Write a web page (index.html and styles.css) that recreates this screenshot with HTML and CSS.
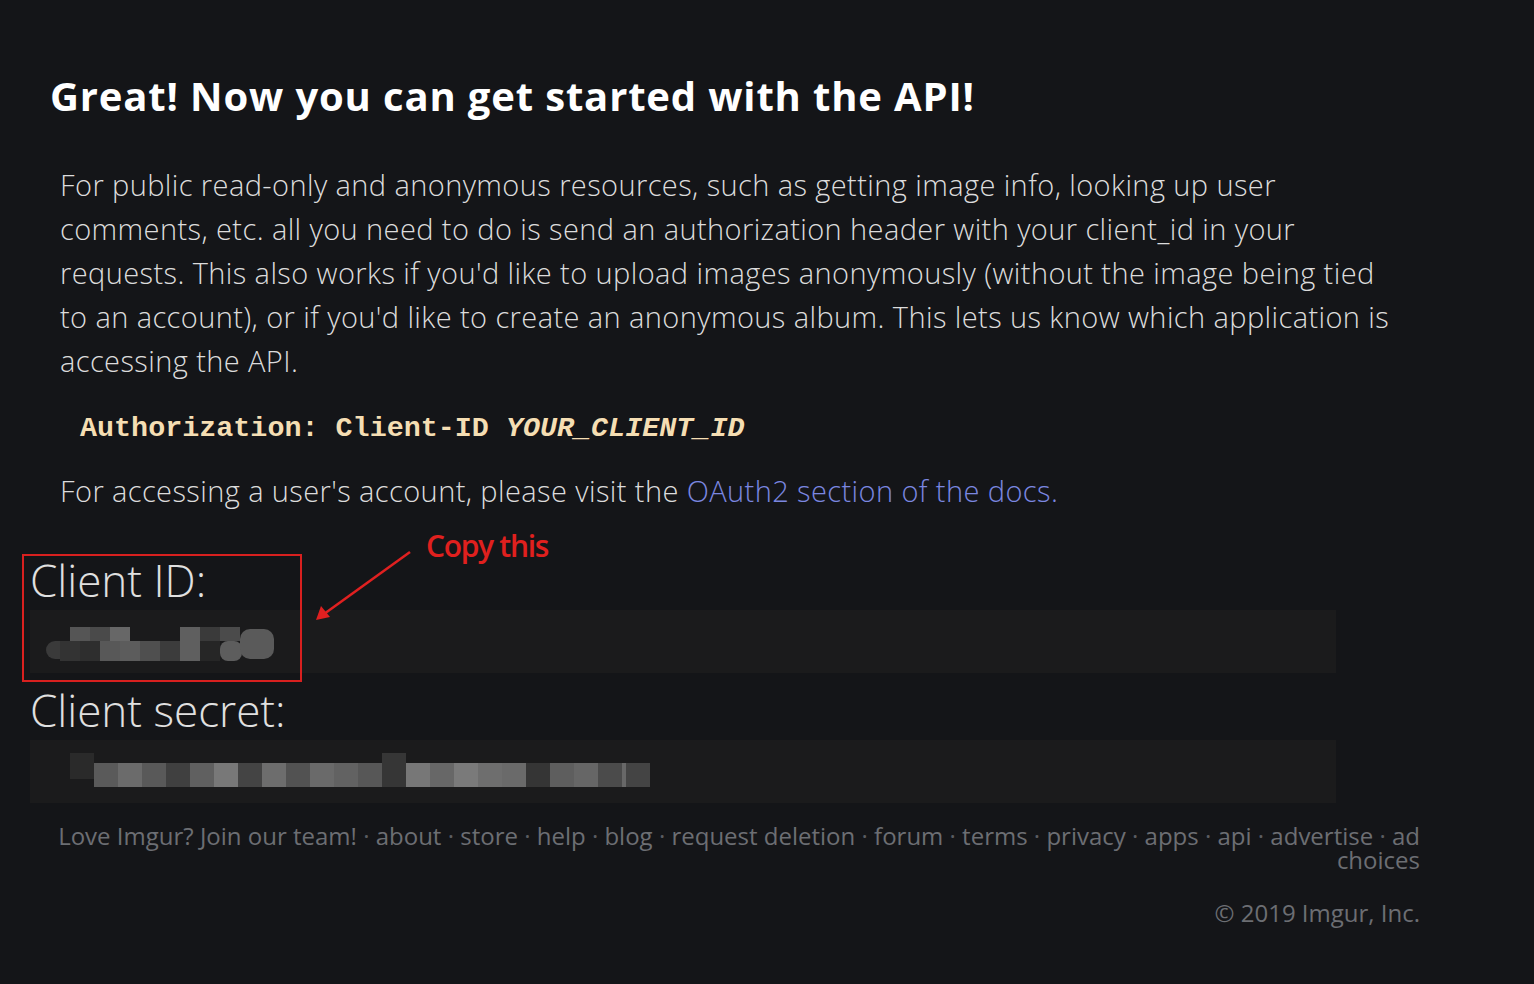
FILE: index.html
```html
<!DOCTYPE html>
<html lang="en">
<head>
<meta charset="utf-8">
<title>Imgur API</title>
<link rel="stylesheet" href="styles.css">
</head>
<body>
<main class="page">
  <h1 class="title">Great! Now you can get started with the API!</h1>
  <section class="intro">
    <p class="text">For public read-only and anonymous resources, such as getting image info, looking up user comments, etc. all you need to do is send an authorization header with your client_id in your requests. This also works if you'd like to upload images anonymously (without the image being tied to an account), or if you'd like to create an anonymous album. This lets us know which application is accessing the API.</p>
    <pre class="code">Authorization: Client-ID <em>YOUR_CLIENT_ID</em></pre>
    <p class="text text-after">For accessing a user's account, please visit the <a class="link" href="#">OAuth2 section of the docs.</a></p>
  </section>
  <section class="creds">
    <div class="label">Client ID:</div>
    <div class="value">
      <svg class="mask mask-id" width="228" height="34" viewBox="0 0 228 34">
        <rect x="0" y="14" width="30" height="18" rx="9" fill="#3a3a3a"/>
        <rect x="14" y="14" width="20" height="20" fill="#333"/>
        <rect x="24" y="0" width="20" height="14" fill="#555"/>
        <rect x="34" y="14" width="20" height="20" fill="#2e2e2e"/>
        <rect x="44" y="0" width="20" height="14" fill="#4a4a4a"/>
        <rect x="54" y="14" width="20" height="20" fill="#585858"/>
        <rect x="64" y="0" width="20" height="14" fill="#676767"/>
        <rect x="74" y="14" width="20" height="20" fill="#5c5c5c"/>
        <rect x="94" y="14" width="20" height="20" fill="#4f4f4f"/>
        <rect x="114" y="14" width="20" height="20" fill="#3c3c3c"/>
        <rect x="134" y="0" width="20" height="34" fill="#5f5f5f"/>
        <rect x="154" y="0" width="20" height="14" fill="#3a3a3a"/>
        <rect x="154" y="14" width="20" height="20" fill="#262626"/>
        <rect x="174" y="0" width="20" height="14" fill="#4b4b4b"/>
        <rect x="174" y="14" width="22" height="20" rx="8" fill="#5d5d5d"/>
        <rect x="194" y="2" width="34" height="30" rx="10" fill="#5a5a5a"/>
      </svg>
    </div>
    <div class="label label-secret">Client secret:</div>
    <div class="value">
      <svg class="mask mask-secret" width="580" height="36" viewBox="0 0 580 36">
        <rect x="0" y="0" width="24" height="26" fill="#2a2a2a"/>
        <rect x="24" y="10" width="24" height="24" fill="#5a5a5a"/>
        <rect x="48" y="10" width="24" height="24" fill="#6b6b6b"/>
        <rect x="72" y="10" width="24" height="24" fill="#595959"/>
        <rect x="96" y="10" width="24" height="24" fill="#404040"/>
        <rect x="120" y="10" width="24" height="24" fill="#606060"/>
        <rect x="144" y="10" width="24" height="24" fill="#787878"/>
        <rect x="168" y="10" width="24" height="24" fill="#444"/>
        <rect x="192" y="10" width="24" height="24" fill="#6d6d6d"/>
        <rect x="216" y="10" width="24" height="24" fill="#525252"/>
        <rect x="240" y="10" width="24" height="24" fill="#6a6a6a"/>
        <rect x="264" y="10" width="24" height="24" fill="#626262"/>
        <rect x="288" y="10" width="24" height="24" fill="#575757"/>
        <rect x="312" y="0" width="24" height="34" fill="#363636"/>
        <rect x="336" y="10" width="24" height="24" fill="#777"/>
        <rect x="360" y="10" width="24" height="24" fill="#676767"/>
        <rect x="384" y="10" width="24" height="24" fill="#7a7a7a"/>
        <rect x="408" y="10" width="24" height="24" fill="#6e6e6e"/>
        <rect x="432" y="10" width="24" height="24" fill="#6a6a6a"/>
        <rect x="456" y="10" width="24" height="24" fill="#353535"/>
        <rect x="480" y="10" width="24" height="24" fill="#5e5e5e"/>
        <rect x="504" y="10" width="24" height="24" fill="#666"/>
        <rect x="528" y="10" width="24" height="24" fill="#4b4b4b"/>
        <rect x="552" y="10" width="24" height="24" fill="#686868"/>
        <rect x="556" y="10" width="24" height="24" fill="#444"/>
      </svg>
    </div>
  </section>
  <footer class="footer">
    <nav class="footer-links">
      <a href="#">Love Imgur? Join our team!</a> · <a href="#">about</a> · <a href="#">store</a> · <a href="#">help</a> · <a href="#">blog</a> · <a href="#">request deletion</a> · <a href="#">forum</a> · <a href="#">terms</a> · <a href="#">privacy</a> · <a href="#">apps</a> · <a href="#">api</a> · <a href="#">advertise</a> · <a href="#">ad choices</a>
    </nav>
    <div class="copyright">© 2019 Imgur, Inc.</div>
  </footer>

  <div class="annot-box"></div>
  <div class="annot-text">Copy this</div>
  <svg class="annot-arrow" width="100" height="74" viewBox="0 0 100 74">
    <line x1="96" y1="2" x2="10" y2="64" stroke="#e02020" stroke-width="2.5"/>
    <polygon points="2,70 7,56 16,67" fill="#e02020"/>
  </svg>
</main>
</body>
</html>
```

FILE: styles.css
```css
html, body {
  margin: 0;
  padding: 0;
  background: #141518;
}

.page {
  position: relative;
  width: 1534px;
  min-height: 984px;
  box-sizing: border-box;
  padding: 72px 0 0 30px;
  font-family: "Open Sans", "Noto Sans", sans-serif;
  color: #d8d8d8;
}

.title {
  margin: 0 0 0 20px;
  font-size: 40px;
  line-height: 48px;
  font-weight: 700;
  letter-spacing: 0.85px;
  color: #ffffff;
}

.intro {
  margin: 43px 0 0 30px;
  width: 1345px;
}

.text {
  margin: 0;
  font-size: 29px;
  line-height: 44px;
  font-weight: 300;
  letter-spacing: 0.4px;
  color: #dcdcdc;
}

.text-after {
  margin-top: 20px;
}

.code {
  margin: 26px 0 0 20px;
  font-family: "Liberation Mono", "Courier New", monospace;
  font-weight: 700;
  font-size: 28.4px;
  line-height: 40px;
  color: #f5deb3;
}

.code em {
  font-style: italic;
}

.link {
  color: #7b87e0;
  text-decoration: none;
}

.creds {
  margin-top: 41px;
  width: 1306px;
}

.label {
  font-size: 44px;
  line-height: 52px;
  font-weight: 300;
  color: #e0e0e0;
}

.label-secret {
  margin-top: 11px;
}

.value {
  height: 63px;
  margin-top: 4px;
  background: #1b1b1c;
  display: flex;
  align-items: center;
}

.mask-id {
  margin-left: 16px;
  margin-top: 4px;
}

.mask-secret {
  margin-left: 40px;
  margin-top: -2px;
}

.footer {
  margin-top: 21px;
  width: 1390px;
  text-align: right;
  font-size: 24px;
  line-height: 24px;
}

.footer-links {
  padding-left: 20px;
  color: #5a5c61;
}

.footer-links a {
  color: #6c6e73;
  text-decoration: none;
}

.copyright {
  margin-top: 29px;
  color: #6c6e73;
}

.annot-box {
  position: absolute;
  left: 22px;
  top: 554px;
  width: 276px;
  height: 124px;
  border: 2px solid #d8201f;
}

.annot-text {
  position: absolute;
  left: 426px;
  top: 526px;
  font-family: "Open Sans", sans-serif;
  font-size: 30px;
  line-height: 40px;
  font-weight: 600;
  letter-spacing: -1.3px;
  color: #e0201e;
}

.annot-arrow {
  position: absolute;
  left: 314px;
  top: 550px;
}
```
